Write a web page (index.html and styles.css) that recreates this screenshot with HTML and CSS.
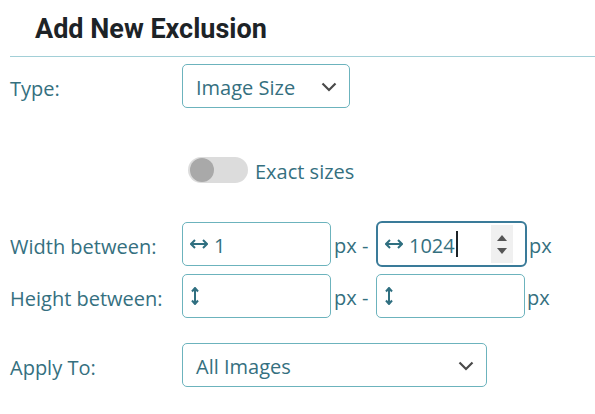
FILE: index.html
```html
<!DOCTYPE html>
<html>
<head>
<meta charset="utf-8">
<link rel="stylesheet" href="styles.css">
</head>
<body>
<div class="panel">
  <h2 class="title">Add New Exclusion</h2>
  <div class="rule"></div>

  <div class="row row-type">
    <div class="label">Type:</div>
    <div class="select sel-type">
      <span class="txt">Image Size</span>
      <svg class="chev" width="16" height="10" viewBox="0 0 16 10"><path d="M1.5 1.5 L8 8 L14.5 1.5" fill="none" stroke="#4a4a4a" stroke-width="2.2"/></svg>
    </div>
  </div>

  <div class="row row-toggle">
    <div class="label"></div>
    <div class="toggle"><div class="thumb"></div></div>
    <span class="toggle-text txt">Exact sizes</span>
  </div>

  <div class="row row-width">
    <div class="label">Width between:</div>
    <div class="input">
      <svg class="harrow" width="18" height="10" viewBox="0 0 18 10"><path d="M1 5 H17 M5 1 L1 5 L5 9 M13 1 L17 5 L13 9" fill="none" stroke="#2f6f80" stroke-width="2"/></svg>
      <span class="val txt">1</span>
    </div>
    <span class="unit txt">px -</span>
    <div class="input focused">
      <svg class="harrow" width="18" height="10" viewBox="0 0 18 10"><path d="M1 5 H17 M5 1 L1 5 L5 9 M13 1 L17 5 L13 9" fill="none" stroke="#2f6f80" stroke-width="2"/></svg>
      <span class="val txt">1024</span><span class="caret"></span>
      <div class="spin">
        <svg width="10" height="6" viewBox="0 0 10 6"><path d="M0 6 L5 0 L10 6 Z" fill="#555"/></svg>
        <svg width="10" height="6" viewBox="0 0 10 6"><path d="M0 0 L5 6 L10 0 Z" fill="#555"/></svg>
      </div>
    </div>
    <span class="unit last txt">px</span>
  </div>

  <div class="row row-height">
    <div class="label">Height between:</div>
    <div class="input">
      <svg class="varrow" width="8" height="18" viewBox="0 0 8 18"><path d="M4 1 V17 M1 4.5 L4 1 L7 4.5 M1 13.5 L4 17 L7 13.5" fill="none" stroke="#2f6f80" stroke-width="2"/></svg>
    </div>
    <span class="unit txt">px -</span>
    <div class="input">
      <svg class="varrow" width="8" height="18" viewBox="0 0 8 18"><path d="M4 1 V17 M1 4.5 L4 1 L7 4.5 M1 13.5 L4 17 L7 13.5" fill="none" stroke="#2f6f80" stroke-width="2"/></svg>
    </div>
    <span class="unit last txt">px</span>
  </div>

  <div class="row row-apply">
    <div class="label">Apply To:</div>
    <div class="select sel-apply">
      <span class="txt">All Images</span>
      <svg class="chev" width="16" height="10" viewBox="0 0 16 10"><path d="M1.5 1.5 L8 8 L14.5 1.5" fill="none" stroke="#4a4a4a" stroke-width="2.2"/></svg>
    </div>
  </div>
</div>
</body>
</html>
```

FILE: styles.css
```css
html, body {
  margin: 0;
  padding: 0;
  background: #fff;
}
.panel {
  padding-left: 10px;
  font-family: "Open Sans", "Noto Sans", sans-serif;
  font-size: 20px;
  color: #35707f;
}
.title {
  margin: 0;
  padding: 12px 0 0 25px;
  height: 42px;
  box-sizing: border-box;
  font-family: Roboto, "Liberation Sans", sans-serif;
  font-weight: 700;
  font-size: 27px;
  line-height: 34px;
  color: #1d2327;
}
.rule {
  margin-top: 14px;
  height: 1px;
  background: #a2cfd7;
}
.row {
  display: flex;
  align-items: center;
}
.label {
  width: 172px;
  flex: none;
  padding-top: 4px;
}
.txt {
  padding-top: 3px;
}
.row-type { margin-top: 7px; }
.row-toggle { margin-top: 49px; height: 26px; }
.row-width { margin-top: 38px; }
.row-height { margin-top: 7px; }
.row-apply { margin-top: 25px; }

.select {
  height: 44px;
  box-sizing: border-box;
  border: 1px solid #6cb3bd;
  border-radius: 5px;
  display: flex;
  align-items: center;
  justify-content: space-between;
  padding: 0 12px 0 13px;
}
.sel-type { width: 168px; }
.sel-apply { width: 305px; }
.chev { margin-top: 1px; }

.toggle {
  margin-left: 6px;
  width: 60px;
  height: 26px;
  border-radius: 13px;
  background: #dcdcdc;
  display: flex;
  align-items: center;
  padding-left: 2px;
  box-sizing: border-box;
}
.thumb {
  width: 24px;
  height: 24px;
  border-radius: 50%;
  background: #a9a9a9;
}
.toggle-text {
  margin-left: 7px;
}

.input {
  width: 149px;
  height: 44px;
  box-sizing: border-box;
  border: 1px solid #6cb3bd;
  border-radius: 5px;
  display: flex;
  align-items: center;
  padding-left: 7px;
  position: relative;
}
.input.focused {
  width: 151px;
  height: 46px;
  border: 2px solid #3a7b99;
  border-radius: 6px;
  padding-left: 7px;
}
.harrow { margin-right: 6px; }
.varrow { margin-left: 1px; }
.val {
  color: #35707f;
  font-size: 20px;
}
.caret {
  width: 2px;
  height: 26px;
  background: #1d2327;
  margin-left: 1px;
}
.spin {
  position: absolute;
  right: 12px;
  top: 2px;
  bottom: 2px;
  width: 22px;
  background: #f0f0f0;
  display: flex;
  flex-direction: column;
  align-items: center;
  justify-content: space-around;
  padding: 6px 0;
  box-sizing: border-box;
}
.unit {
  margin-left: 3px;
  width: 42px;
  flex: none;
}
.unit.last { width: auto; margin-left: 2px; }
```
